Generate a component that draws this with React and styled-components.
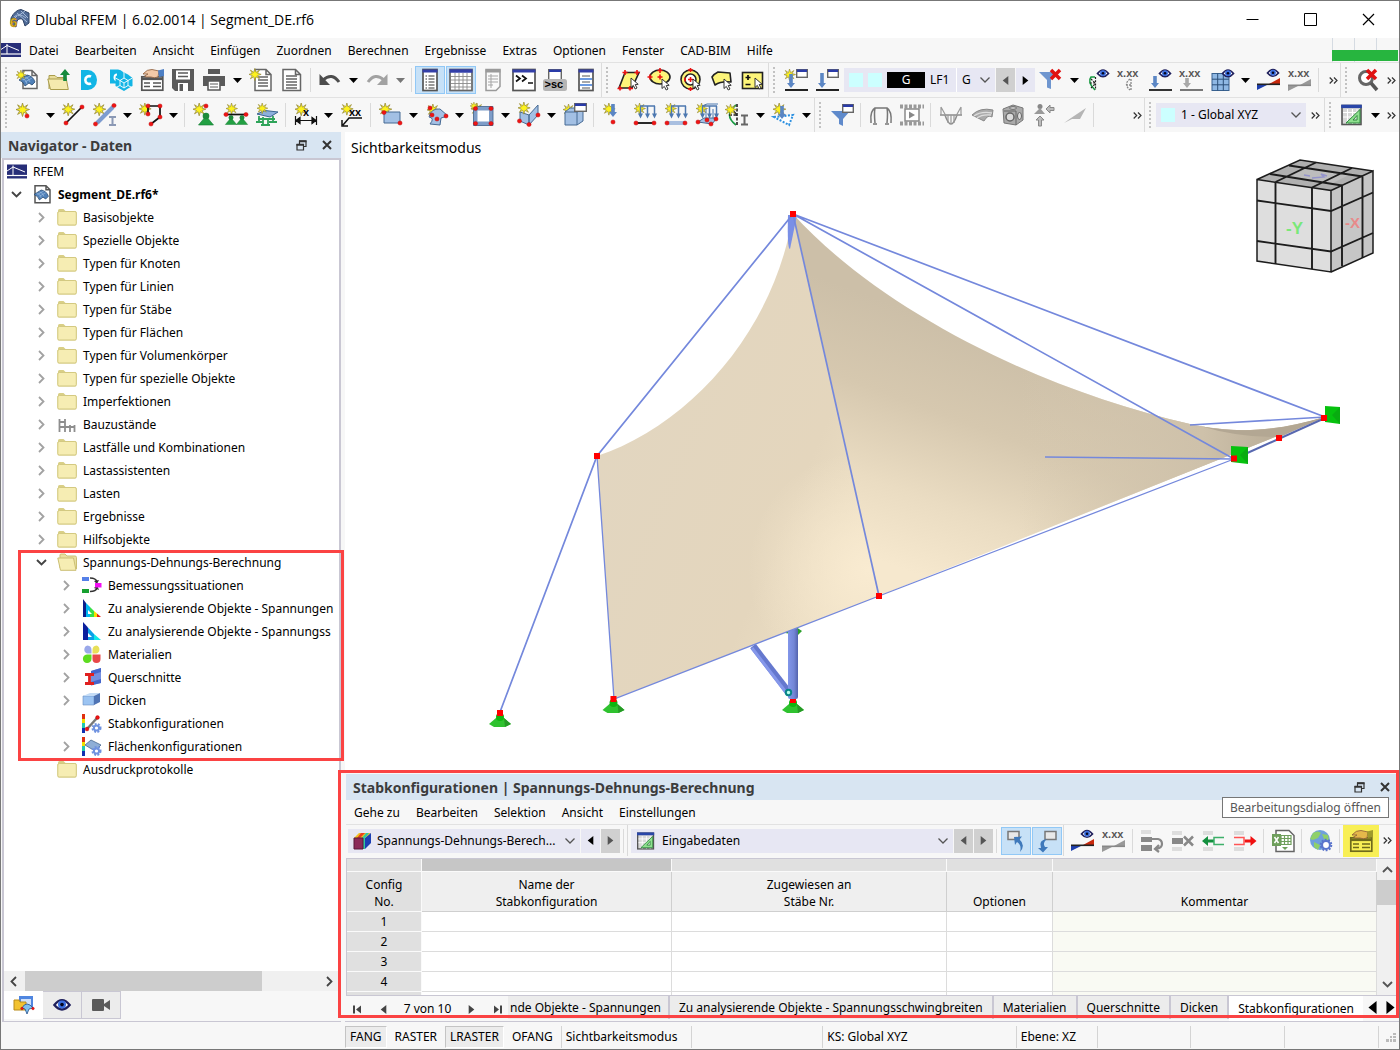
import React from "react";
import styled, { createGlobalStyle, css } from "styled-components";

const Global = createGlobalStyle`
  *, *::before, *::after { box-sizing: border-box; }
  body {
    margin: 0;
    background: #f7f7f7;
    color: #000;
    font: 12px/18px "Noto Sans", "Open Sans", sans-serif;
  }
  button, select { font: inherit; color: inherit; }
  svg { display: block; flex: none; overflow: visible; }
`;

const resetButton = css`
  margin: 0;
  padding: 0;
  border: 0;
  background: none;
`;

/* ---------- frame ---------- */

const Window = styled.div`
  display: flex;
  flex-direction: column;
  height: 100vh;
  min-height: 700px;
  border: 1px solid #777;
  background: #f7f7f7;
  overflow: hidden;
`;

const TitleBar = styled.header`
  display: flex;
  align-items: center;
  height: 37px;
  padding: 0 4px 0 8px;
  gap: 5px;
  background: #fff;
`;

const WindowTitle = styled.h1`
  flex: 1;
  margin: 0;
  font: 400 14px/20px "Open Sans", sans-serif;
`;

const WindowButton = styled.button`
  ${resetButton}
  display: flex;
  align-items: center;
  justify-content: center;
  width: 53px;
  height: 36px;
`;

const MenuBar = styled.nav`
  display: flex;
  align-items: center;
  height: 24px;
  flex: none;
`;

const MenuItem = styled.button`
  ${resetButton}
  padding: 2px 8px 0;
  height: 24px;
`;

const Progress = styled.div`
  display: flex;
  align-self: stretch;
  margin: 0 1px 0 auto;
`;

const ProgressCell = styled.span`
  display: flex;
  align-items: flex-end;
  width: 22px;
  border-left: 1px solid #d5dbe2;

  &::after {
    content: "";
    width: 22px;
    height: 11px;
    margin: 0 0 1px -1px;
    background: #27b53f;
    flex: none;
  }
`;

/* ---------- tool bars ---------- */

const ToolRow = styled.div`
  display: flex;
  align-items: stretch;
  flex: none;
  height: 35px;
  border-top: 1px solid #e2e2e2;
`;

const ToolGroup = styled.div`
  display: flex;
  align-items: center;
  flex: none;
  border-left: ${(p) => (p.$first ? 0 : 1)}px solid #dcdcdc;
  padding-left: 4px;

  &::before {
    content: "";
    width: 2px;
    height: 26px;
    margin-right: 5px;
    background: repeating-linear-gradient(#c2c2c2 0 2px, transparent 2px 4px);
  }
`;

const ToolButton = styled.button`
  ${resetButton}
  display: flex;
  align-items: center;
  justify-content: center;
  align-self: center;
  flex: none;
  width: ${(p) => p.$w || 31}px;
  height: 28px;
  ${(p) =>
    p.$on &&
    css`
      width: 30px;
      margin-right: 1px;
      background: #c7e1f7;
      border: 1px solid #91c8f6;
    `}
  ${(p) =>
    p.$marked &&
    css`
      width: 36px;
      height: 32px;
      background: #f8ef55;
    `}
`;

const Separator = styled.span`
  flex: none;
  width: 1px;
  height: 24px;
  margin: 0 ${(p) => (p.$wide ? 4 : 3)}px 0 3px;
  background: #dadada;
`;

const Spacer = styled.span`
  flex: 1;
`;

const Combo = styled.label`
  display: flex;
  align-items: center;
  gap: ${(p) => p.$gap || 6}px;
  height: 24px;
  margin-left: ${(p) => p.$indent || 0}px;
  padding-left: 5px;
  background: #e7e7f3;
  position: relative;
  flex: ${(p) => (p.$grow ? "1" : "none")};
  width: ${(p) => (p.$w ? p.$w + "px" : "auto")};

  & > svg:last-child {
    position: absolute;
    right: 5px;
    top: 9px;
    pointer-events: none;
  }
`;

const Picker = styled.select`
  appearance: none;
  flex: 1;
  min-width: 0;
  height: 24px;
  padding: 0 20px 0 0;
  border: 0;
  background: transparent;
`;

const Swatch = styled.span`
  width: 14px;
  height: 14px;
  background: #cff;
`;

const LoadTag = styled.span`
  width: 38px;
  height: 16px;
  background: #000;
  color: #fff;
  line-height: 16px;
  text-align: center;
`;

const LoadCase = styled.span`
  width: 27px;
  border-right: 1px solid #fff;
  line-height: 24px;
`;

const Stepper = styled.button`
  ${resetButton}
  display: flex;
  align-items: center;
  justify-content: center;
  width: 19px;
  height: 24px;
  margin-left: 1px;
  background: ${(p) => (p.disabled ? "#d0d0d0" : "#e7e7f3")};
  color: ${(p) => (p.disabled ? "#555" : "#000")};
`;

/* ---------- docks ---------- */

const Workspace = styled.main`
  display: flex;
  flex: 1;
  min-height: 0;
  gap: 4px;
`;

const Navigator = styled.aside`
  display: flex;
  flex-direction: column;
  flex: none;
  width: 340px;
`;

const DockTitle = styled.div`
  display: flex;
  align-items: center;
  flex: none;
  height: 26px;
  padding: 0 5px 0 7px;
  gap: 8px;
  background: #d8e5f2;
  color: #3c3c3c;

  h2 {
    flex: 1;
    margin: 0;
    padding-top: 2px;
    font: 700 14px/20px "Noto Sans", sans-serif;
  }
`;

const DockButton = styled.button`
  ${resetButton}
  display: flex;
  align-items: center;
  justify-content: center;
  width: 18px;
  height: 18px;
`;

const TreeFrame = styled.div`
  display: flex;
  flex-direction: column;
  flex: 1;
  min-height: 0;
  margin-left: 1px;
  border: solid #c9c7d3;
  border-width: 2px 2px 0;
  background: #fff;
`;

const Tree = styled.ul`
  flex: 1;
  min-height: 0;
  margin: 0;
  padding: 0;
  list-style: none;

  ul {
    margin: 0;
    padding: 0;
    list-style: none;
  }
`;

const TreeRow = styled.div`
  display: flex;
  align-items: center;
  height: 23px;
  padding-left: ${(p) => (p.$root ? 3 : p.$level * 25)}px;
  overflow: hidden;
  white-space: nowrap;
  font-weight: ${(p) => (p.$bold ? 700 : 400)};

  & > svg {
    margin: 0 6px 0 ${(p) => (p.$root ? 0 : 4)}px;
  }
`;

const Expander = styled.span`
  display: flex;
  justify-content: center;
  flex: none;
  width: 24px;
`;

const MarkedBranch = styled.li`
  position: relative;

  &::after {
    content: "";
    position: absolute;
    inset: -1px -5px -3px 14px;
    border: 3px solid #fb4343;
    z-index: 2;
    pointer-events: none;
  }
`;

const HScroll = styled.div`
  display: flex;
  align-items: center;
  justify-content: space-between;
  height: 20px;
  padding: 0 6px;
  background: #f0f0f0;

  span {
    flex: 1;
    height: 20px;
    margin: 0 64px 0 8px;
    background: #cdcdcd;
  }
`;

const DockTabs = styled.div`
  display: flex;
  height: 31px;
  margin-left: 1px;
  border: solid #c9c7d3;
  border-width: 0 0 1px 2px;
`;

const DockTab = styled.button`
  ${resetButton}
  display: flex;
  align-items: center;
  justify-content: center;
  width: 39px;
  height: 28px;
  background: ${(p) => (p.$active ? "#fff" : "#ececec")};
  border: solid #c9c7d3;
  border-width: ${(p) => (p.$active ? 0 : "1px 1px 1px 0")};
`;

const Center = styled.div`
  display: flex;
  flex-direction: column;
  flex: 1;
  min-width: 0;
`;

const Viewport = styled.section`
  position: relative;
  flex: 1;
  min-height: 0;
  background: #fff;
`;

const ModeLabel = styled.span`
  position: absolute;
  left: 6px;
  top: 6px;
  font: 14px/20px "Noto Sans", sans-serif;
`;

const CubeBox = styled.div`
  position: absolute;
  right: 19px;
  top: 20px;
`;

const TableDock = styled.section`
  position: relative;
  display: flex;
  flex-direction: column;
  flex: none;
  margin-top: 4px;
  padding-left: 1px;
  height: 248px;
  border-bottom: 1px solid #c9c7d3;

  &::after {
    content: "";
    position: absolute;
    inset: -4px 0 3px -7px;
    border: 3px solid #fb4343;
    z-index: 2;
    pointer-events: none;
  }
`;

const TableTools = styled.div`
  display: flex;
  align-items: center;
  flex: none;
  height: 34px;
  padding: 0 4px 2px 2px;
  border-top: 1px solid #e2e2e2;
`;

const FullSeparator = styled.span`
  align-self: stretch;
  width: 1px;
  margin-right: 3px;
  background: #dadada;
`;

const Tooltip = styled.div`
  position: absolute;
  right: 10px;
  top: 23px;
  z-index: 3;
  height: 21px;
  padding: 0 7px;
  border: 1px solid #767676;
  background: #fff;
  color: #575757;
  line-height: 20px;
`;

const TableArea = styled.div`
  display: flex;
  flex: none;
  height: 138px;
  border: solid #c9c7d3;
  border-width: 1px 0 1px 1px;
  overflow: hidden;
  margin-right: 2px;
`;

const Grid = styled.table`
  flex: 1;
  width: 0;
  height: max-content;
  table-layout: fixed;
  border-collapse: separate;
  border-spacing: 0;
  background: #fff;

  th, td {
    padding: 0;
    font-weight: 400;
    text-align: center;
    border: solid #dcdcdc;
    border-width: 0 1px 1px 0;
  }
  thead tr:first-child th {
    height: 13px;
    background: #e0e0e0;
    border-color: #fafafa;
  }
  thead tr:first-child th:nth-child(2) { background: #c6c6c6; }
  thead tr:last-child th {
    height: 40px;
    padding-bottom: 1px;
    background: #efefef;
    border-color: #cfcfcf;
    vertical-align: bottom;
    line-height: 17px;
  }
  tbody tr > * {
    height: 20px;
    line-height: 19px;
  }
  tbody td:last-child { background: #f9faf3; }
  tr > th:first-child, thead tr:last-child th:first-child {
    background: #e0e0e0;
    border-color: #fafafa;
  }
`;

const VScroll = styled.div`
  display: flex;
  flex-direction: column;
  align-items: center;
  justify-content: space-between;
  flex: none;
  width: 20px;
  padding: 7px 0;
  background: #f0f0f0;

  span {
    width: 20px;
    height: 25px;
    margin: 7px 0 auto;
    background: #cdcdcd;
  }
`;

const SheetBar = styled.div`
  display: flex;
  flex: none;
  height: 25px;
`;

const Pager = styled.div`
  display: flex;
  align-items: center;
  justify-content: space-between;
  flex: none;
  width: 162px;
  padding: 1px 4px 0 5px;
`;

const PagerButton = styled.button`
  ${resetButton}
  width: 12px;
  display: flex;
  justify-content: center;
  color: #444;
`;

const SheetArrow = styled.button`
  ${resetButton}
  display: flex;
  align-items: center;
  justify-content: center;
  width: 18px;
  height: 22px;
`;

const SheetTab = styled.button`
  ${resetButton}
  flex: ${(p) => (p.$grow ? "1 1 0" : "none")};
  height: ${(p) => (p.$active ? 25 : 23)}px;
  padding: ${(p) => (p.$grow ? "0 7px 0 0" : "0 9px")};
  white-space: nowrap;
  text-align: ${(p) => (p.$grow ? "right" : "center")};
  background: ${(p) => (p.$active ? "#fff" : "#ececec")};
  border-right: ${(p) => (p.$active ? 0 : 2)}px solid #c9c7d3;
  line-height: 24px;
`;

const StatusBar = styled.footer`
  display: flex;
  align-items: center;
  flex: none;
  height: 27px;
  padding: 3px 3px 0 344px;
`;

const StatusToggle = styled.button`
  ${resetButton}
  height: 22px;
  padding: 0 4px;
  margin-right: 3px;
  border: 1px solid transparent;
  ${(p) =>
    p.$on &&
    css`
      background: #ececec;
      border-color: #c4c4c4 #fff #fff #c4c4c4;
    `}
`;

const StatusCell = styled.span`
  width: ${(p) => p.$w}px;
  height: 22px;
  padding-left: 4px;
  border-left: 1px solid #d4d4d4;
  line-height: 22px;
  white-space: nowrap;
`;

/* ---------- drawing parts ---------- */

const Star = ({ x = 0, y = 0, s = 1 }) => (
  <path
    transform={`translate(${x} ${y}) scale(${s})`}
    d="M6.5 0 7.8 4.3 11.6 1.8 9.4 5.4 13.5 6.5 9.4 7.9 11.6 11.4 7.8 9.2 6.5 13.5 5.3 9.2 1.6 11.4 3.7 7.9 0 6.5 3.7 5.4 1.6 1.8 5.3 4.3Z"
    fill="#fdf21c"
    stroke="#978a3a"
    strokeWidth=".8"
  />
);
const Dot = ({ x, y, r = 2.1 }) => <circle cx={x} cy={y} r={r} fill="#f01414" stroke="#b00000" strokeWidth=".4" />;
const Eye = ({ x = 0, y = 0 }) => (
  <g transform={`translate(${x} ${y})`}>
    <path d="M.5 4.5Q6 -2.5 11.5 4.5Q6 11 .5 4.5Z" fill="#fff" stroke="#20205c" strokeWidth="1.7" />
    <circle cx="6" cy="4.2" r="2.9" fill="#3a6ee0" />
    <circle cx="6" cy="4.2" r="1.3" fill="#05051c" />
  </g>
);
const Cursor = ({ x, y }) => (
  <path transform={`translate(${x} ${y})`} d="M0 0V9.5L2.3 7.4 4.2 11 6 10 4.2 6.6 7.2 6.3Z" fill="#fff" stroke="#222" strokeWidth=".9" />
);
const Down = ({ x, y, h = 12, c = "#5b86c4" }) => (
  <path d={`M${x - 1.8} ${y}h3.6v${h - 5}h2.2L${x} ${y + h}l-4-5h2.200z`} fill={c} />
);
const Win = ({ x, y, w, h, c = "#2a3ba8" }) => (
  <g>
    <rect x={x + 0.7} y={y + 0.7} width={w - 1.4} height={h - 1.4} fill="#fff" stroke="#666" strokeWidth="1.4" />
    <rect x={x + 1} y={y + 0.5} width={w - 2} height="2.5" fill={c} />
  </g>
);
const Sheet = ({ x, y, w, h, fold = 5, c = "#666" }) => (
  <path d={`M${x} ${y}h${w - fold}l${fold} ${fold}v${h - fold}h${-w}zM${x + w - fold} ${y}v${fold}h${fold}`} fill="#fff" stroke={c} strokeWidth="1.5" />
);
const Num = ({ x = 0, y = 0, c = "#555" }) => (
  <text x={x} y={y} fontSize="11" fontWeight="700" fontFamily="Liberation Sans" fill={c}>x.xx</text>
);
const Foot = ({ x, y, s = 1 }) => (
  <g transform={`translate(${x} ${y}) scale(${s})`}>
    <path d="M0 1 7.5 10H-7.5Z" fill="#22a043" stroke="#117a30" strokeWidth=".6" />
    <circle cx="0" cy="1" r="3.3" fill="#1d8a3c" />
  </g>
);
const Arch = ({ x = 0, y = 0, s = 1 }) => (
  <g transform={`translate(${x} ${y}) scale(${s})`}>
    <path d="M0 5 8 0q6 1 8 7l-3 3-3-2-4 3Q4 6 0 5Z" fill="#4f80b8" stroke="#24476e" strokeWidth=".8" />
    <path d="M3 4q4 0 5 5M6 2q4 1 5 5M4 5l7-4M6 7l7-4" fill="none" stroke="#a9c8e8" strokeWidth=".6" />
  </g>
);
const Slab = ({ d }) => <path d={d} fill="#a3c0e4" stroke="#476a94" strokeWidth="1" />;
const Cross = ({ x, y, s = 8, c = "#e01010", w = 3 }) => (
  <path d={`M${x} ${y}l${s} ${s}M${x + s} ${y}l${-s} ${s}`} stroke={c} strokeWidth={w} fill="none" />
);
const DiagramShape = ({ a = "#1e3fae", b = "#c8280c", k = "#222" }) => (
  <g>
    <path d="M0 16 0 22 12 16Z" fill={a} />
    <path d="M12 16 23 10v6Z" fill={b} />
    <path d="M0 16.3h23" stroke={k} strokeWidth="1.6" />
  </g>
);
const Calc = () => (
  <g>
    <rect x="2" y="2.5" width="19" height="19" fill="#d8d8d8" stroke="#555" strokeWidth="1.6" />
    <rect x="1.200" y="1.7" width="20.600" height="3.4" fill="#2946a8" />
    <path d="M3 9.5h17M3 14h17M7.5 6v15M12.5 6v15M17 6v15" stroke="#fff" strokeWidth="1" />
    <path d="M6 20 20 6.5V20ZM13 17h4v-4.5Z" fill="#8fe08f" fillRule="evenodd" stroke="#2f8a3f" strokeWidth="1" />
  </g>
);
const CardBox = ({ c = "#555", w = "#fff", hand = "#f2c9a8", cuff = "#4d7fc4" }) => (
  <g>
    <rect x="1.8" y="8.8" width="21" height="13.4" fill={w} stroke={c} strokeWidth="1.7" />
    <path d="M1.5 10.8h21.5" stroke={c} strokeWidth="2.6" />
    <path d="M4 15h6M13 15h8M4 18.5h6M13 18.5h8" stroke={c} strokeWidth="1.5" />
    <path d="M3 6q4-5 9-4.5L19 3l-1 6q-4 1.500-7 0L6 9 4.500 8 8 6Z" fill={hand} stroke="#8a5a38" strokeWidth=".8" />
    <path d="M18 2.500 24 1v7l-5 1z" fill={cuff} />
  </g>
);
const LoadArrows = ({ base }) => (
  <g>
    <Star x={1} y={0} s={0.85} />
    <path d="M7 3H22M7.500 3v9M14.500 3v9M21.500 3v9" stroke="#4d78b0" strokeWidth="1.500" fill="none" />
    <path d="M5 10.500h5L7.500 15.500zM12 10.500h5l-2.500 5zM19 10.500h5l-2.500 5z" fill="#4d78b0" />
    {base}
  </g>
);
const RfemMark = () => (
  <g>
    <rect width="20" height="14" fill="#272e78" />
    <path d="M0 11h20" stroke="#fff" strokeWidth="1.2" />
    <path d="M0 6.500 6 2.500 18 7.500M6 1v10" stroke="#fff" strokeWidth="1" fill="none" />
  </g>
);
const Gear = ({ x, y, r = 3.500, c = "#6f92e0" }) => (
  <g>
    <circle cx={x} cy={y} r={r + 0.8} fill="none" stroke={c} strokeWidth="2" strokeDasharray="1.900 1.400" />
    <circle cx={x} cy={y} r={r - 0.6} fill="#fff" stroke={c} strokeWidth="2" />
  </g>
);

const art = {
  newModel: <><Sheet x={7} y={2.5} w={14} h={18} /><Arch x={3} y={7} /><Star x={0} y={2} s={0.75} /></>,
  open: <><path d="M2 21V7.500h6l2 2h9V13" fill="#e8dc9a" stroke="#a99c4c" /><path d="M.8 11h18.500l2 10.500H3.500Z" fill="#f4eaae" stroke="#a99c4c" /><path d="M18 1 23 7h-3.200v6h-3.600V7H13Z" fill="#168a3d" /></>,
  dlubal: <><path d="M3 2H10a9 10 0 0 1 0 20H3Z" fill="#12b5e5" /><path d="M13 8.700a3.800 3.800 0 1 0 0 6.600" fill="none" stroke="#fff" strokeWidth="2.600" /></>,
  cubes: <><path d="M1 1.500h8q6 1 7 7v7H1z" fill="#12b5e5" /><path d="M8 6.500a2.500 3 0 1 0 0 6" fill="none" stroke="#fff" strokeWidth="2" /><path d="M15 4.500 19 6.500 23.500 10v8L19 20.500 15 23 10.500 20.500 6.500 18V10.500L11 8Z" fill="#12b5e5" /><path d="M15 5v5l4 2.500 4.500-2.500M15 10l-4 2.500L6.500 10M11 12.500v5l4 2.500 4-2.500v-5L15 15l-4-2.500M15 15v5M11 17.500l-4 2M19 17.500l4 2" stroke="#fff" strokeWidth=".9" fill="none" /></>,
  cards: <CardBox />,
  save: <><path d="M1 1h22v22H4L1 20Z" fill="#5a5a5a" /><rect x="5" y="2.500" width="14" height="9" fill="#fff" /><path d="M7 5h10M7 8.500h10" stroke="#5a5a5a" strokeWidth="1.500" /><rect x="7" y="15" width="10" height="8" fill="#fff" /><rect x="8.500" y="16" width="3.500" height="7" fill="#5a5a5a" /></>,
  print: <><path d="M6 1h12v5H6zM1 8h22v10H1z" fill="#5a5a5a" /><path d="M6 13h12v9H6z" fill="#fff" stroke="#5a5a5a" strokeWidth="1.600" /><path d="M8 16h8M8 19h8" stroke="#5a5a5a" /></>,
  newReport: <><Sheet x={6} y={1.5} w={16} h={21} /><path d="M9 9h10M9 12h10M9 15h10M9 18h10" stroke="#666" strokeWidth="1.300" /><Star x={0} y={0.5} s={0.9} /></>,
  report: <><Sheet x={3} y={1.5} w={17.500} h={21} /><path d="M6 8h11M6 11h11M6 14h11M6 17h11M6 20h11" stroke="#666" strokeWidth="1.300" /></>,
  undo: <><path d="M1.500 6v11h10.500Z" fill="#4d4d4d" /><path d="M5 12q9-8 16 2" fill="none" stroke="#4d4d4d" strokeWidth="3" /></>,
  redo: <><path d="M22.500 6v11H12Z" fill="#a2a2a2" /><path d="M19 12q-9-8-16 2" fill="none" stroke="#a2a2a2" strokeWidth="3" /></>,
  winList: <><rect x="5" y="1.500" width="14" height="21" fill="#fff" stroke="#555" strokeWidth="1.700" /><path d="M4.500 3h15" stroke="#333fa8" strokeWidth="3" /><path d="M7.500 8h1.500M10.500 8h6M7.500 11h1.500M10.500 11h6M7.500 14h1.500M10.500 14h6M7.500 17h1.500M10.500 17h6M7.500 20h1.500M10.500 20h6" stroke="#333" /></>,
  winTable: <><rect x="1" y="1.500" width="22" height="21" fill="#fff" stroke="#666" strokeWidth="1.700" /><path d="M.5 3h23" stroke="#333fa8" strokeWidth="3.500" /><path d="M2 8.500h20M2 12h20M2 15.500h20M2 19h20M6 5v17M10 5v17M14 5v17M18 5v17" stroke="#8b8b8b" strokeWidth=".9" /></>,
  winGrey: <><path d="M5 1.500h14v17l-4 4H5z" fill="#fafafa" stroke="#9a9a9a" strokeWidth="1.500" /><path d="M4.500 3h15" stroke="#9a9a9a" strokeWidth="3" /><path d="M7 8h10M7 11h10M7 14h10M7 17h5M10 6v14" stroke="#a5a5a5" /></>,
  console: <><rect x="1" y="1.500" width="22" height="21" fill="#fff" stroke="#555" strokeWidth="1.700" /><path d="M.5 3h23" stroke="#333fa8" strokeWidth="3" /><path d="M4 7.500 8 10.500 4 13.500M10 7.500 14 10.500 10 13.500M16 15h5" fill="none" stroke="#111" strokeWidth="1.700" /></>,
  script: <><Win x={5} y={1} w={14} h={14} /><rect x="0" y="11" width="24" height="12" rx="2.500" fill="#b5b5b5" /><text x="1.500" y="20" fontSize="11" fontWeight="700" fontFamily="Liberation Sans">&gt;sc</text></>,
  winBlue: <><rect x="5" y="1.500" width="14" height="21" fill="#fff" stroke="#555" strokeWidth="1.700" /><path d="M4.500 3h15" stroke="#333fa8" strokeWidth="3" /><path d="M8 8h8M8 14h8M8 20h8" stroke="#555" strokeWidth="1.200" /><path d="M6 11h12M6 17h12" stroke="#3e7bd8" strokeWidth="1.600" /></>,
  selRhomb: <><path d="M8 4.500h14L15 20H2Z" fill="#fdf57a" stroke="#222" strokeWidth="1.600" /><path d="M8 2v5M5.500 4.500h5M20 2v5M17.500 4.500h5M3 18v4.500M.5 20.500h5M13 18v4.500M11 20.500h5" stroke="#e11" strokeWidth="1.600" /><Cursor x={14} y={10} /></>,
  selEllipse: <><ellipse cx="12" cy="9" rx="10" ry="7" fill="#fdf57a" stroke="#222" strokeWidth="1.600" /><path d="M12 0v5M9.500 2.500h5M2 6.500v5M-.5 9h5M12 6.500v5M9.500 9h5" stroke="#e11" strokeWidth="1.600" /><Cursor x={14} y={11} /></>,
  selRing: <><circle cx="11.500" cy="11.500" r="9.500" fill="#fdf57a" stroke="#222" strokeWidth="1.600" /><circle cx="11.500" cy="11.500" r="5.500" fill="#fff" stroke="#222" strokeWidth="1.500" /><path d="M11.500 0v4M11.500 19v4M9 21h5M9 2h5M11.500 9v5M9 11.500h5M6 9.500v4" stroke="#e11" strokeWidth="1.600" /><Cursor x={14} y={11} /></>,
  selPoly: <><path d="M2 9Q4 6 8 4L20 5 21 14Q11 13 5 17Z" fill="#fdf57a" stroke="#222" strokeWidth="1.600" strokeLinejoin="round" /><Cursor x={14} y={11} /></>,
  selPm: <><rect x="1.500" y="4.500" width="20" height="16" fill="#fdf57a" stroke="#222" strokeWidth="1.600" /><path d="M4.500 9.500h5M7 7v5M4.500 16.500h5" stroke="#111" strokeWidth="1.700" /><Cursor x={14} y={10} /></>,
  newLoadCase: <><path d="M1 22h23" stroke="#222" strokeWidth="2" /><Star x={0} y={1} s={0.85} /><Down x={7} y={6} h={14} /><Win x={12} y={1} w={12} h={9} /></>,
  loadCase: <><path d="M1 22h23" stroke="#222" strokeWidth="2" /><Down x={7} y={5} h={15} /><Win x={12} y={1} w={12} h={9} /></>,
  funnelX: <><path d="M0 4h19l-7 8v9l-4-1.500V12Z" fill="#6f96cf" /><Cross x={12} y={2} s={9} w={3.500} /></>,
  eyeSection: <><path d="M9 9H5Q1 14 9 22" fill="none" stroke="#189a42" strokeWidth="1.600" /><path d="M9.500 9v13M4 15h5M5 11l4 4M5 20l4-4" stroke="#222" strokeDasharray="2 1.200" strokeWidth="1.200" /><Eye x={11} y={1} /></>,
  numSection: <><Num x={0} y={9} /><path d="M13 11q-7 5 0 11M14 11v11M9 17h5" fill="none" stroke="#888" strokeDasharray="2 1" strokeWidth="1.300" /></>,
  eyeLoad: <><path d="M1 22h23" stroke="#333" strokeWidth="2" /><Down x={7} y={8} h={12} /><Eye x={11} y={1} /></>,
  numLoad: <><path d="M1 22h23" stroke="#777" strokeWidth="2" /><Num x={0} y={9} /><Down x={8} y={10} h={10} c="#a8a8a8" /></>,
  eyeGrid: <><rect x="2" y="5.500" width="17" height="17" fill="#8fb8e4" stroke="#38618f" /><path d="M7.700 5.500v17M13.300 5.500v17M2 11.200h17M2 16.800h17" stroke="#2c4f78" /><Eye x={12} y={1} /></>,
  eyeDiagram: <><DiagramShape /><Eye x={10} y={0.5} /></>,
  numDiagram: <><g transform="translate(0 1)"><DiagramShape a="#999" b="#999" k="#888" /></g><Num x={0} y={9} /></>,
  findX: <><circle cx="10" cy="10" r="6.500" fill="#fff" stroke="#666" strokeWidth="3" /><path d="M15 15 21 22" stroke="#555" strokeWidth="3.500" /><Cross x={11} y={2} s={9} w={3.500} /></>,
  node: <><Star x={0} y={0} /><Dot x={11} y={13} /></>,
  line: <><Star x={0} y={0} s={0.95} /><path d="M4 20 20 4" stroke="#111" strokeWidth="1.700" /><Dot x={4} y={20} /><Dot x={20} y={4} /></>,
  member: <><Star x={0} y={0} s={0.95} /><path d="M4 20 20 4" stroke="#7d9cd0" strokeWidth="4" /><Dot x={2.500} y={21} /><Dot x={21} y={2.500} /><path d="M16 14h7M16 22h7M19.500 14v8" stroke="#8b99b5" strokeWidth="2" /></>,
  polyline: <><Star x={0} y={0} s={0.9} /><path d="M9 11V3H21V14L12 21" fill="none" stroke="#111" strokeWidth="1.700" /><Dot x={9} y={11} /><Dot x={9} y={3} /><Dot x={21} y={3} /><Dot x={21} y={14} /><Dot x={12} y={21} /></>,
  support: <><Star x={0} y={0} s={0.95} /><Foot x={13} y={12} /><Dot x={13} y={3} /></>,
  lineSupport: <><Star x={2} y={0} s={0.85} /><Foot x={7} y={14} s={0.75} /><Foot x={18} y={14} s={0.75} /><path d="M2 11.500h21" stroke="#111" strokeWidth="1.700" /><Dot x={2} y={11.500} /><Dot x={22} y={11.500} /></>,
  surfSupport: <><path d="M4 13v6M8 14v7M13 15v6M18 13v6M1 19h7M6 22h9M14 19h8M3 16h17" stroke="#2fa45a" strokeWidth="1.800" /><path d="M2 11 10 7.500 23 9 15 14Z" fill="#8db0dc" stroke="#3c6590" /><Star x={2} y={0} s={0.8} /></>,
  dimX: <><Star x={1} y={0} s={0.95} /><path d="M1.500 13v9M22.500 13v9M2 17.500h20M2 17.500l4-3v6zM22 17.500l-4-3v6z" fill="#111" stroke="#111" strokeWidth="1.200" /><text x="9" y="13" fontSize="11" fontWeight="700" fontFamily="Liberation Sans">x</text></>,
  dimXX: <><Star x={1} y={0} s={0.9} /><path d="M22 15H9L3 22M2 17v6h6" fill="none" stroke="#111" strokeWidth="1.500" /><text x="9" y="13" fontSize="11" fontWeight="700" fontFamily="Liberation Sans">xx</text></>,
  surface: <><Star x={0} y={0} s={0.95} /><Slab d="M5 9H21V20H5Z" /><Dot x={5} y={9.500} /><Dot x={21} y={20} /></>,
  shell: <><Star x={2} y={1} s={0.9} /><Slab d="M4 14Q6 5 15 6L23 13 16 15 15 22 5 21Q10 15 4 14Z" /><Dot x={5} y={5} /><Dot x={7} y={12} /><Dot x={12} y={16} /><Dot x={21} y={13} /></>,
  opening: <><Star x={0} y={0} s={0.9} /><path d="M4.500 5.500H20V20.500H4.500Z" fill="#fff" stroke="#7e9dc8" strokeWidth="4" /><path d="M2.500 3.500H22V22.500H2.500Z" fill="none" stroke="#3d5f8a" strokeWidth=".8" /><Star x={-1} y={-1} s={0.6} /><Dot x={4.500} y={5.500} /><Dot x={20} y={5.500} /><Dot x={4.500} y={20.500} /><Dot x={20} y={20.500} /></>,
  solid: <><Slab d="M3 9 12 12V22L3 18ZM12 12 21 2V12L12 22Z" /><Star x={1} y={-1} s={0.9} /><Dot x={2.500} y={18} /><Dot x={12} y={21.500} /><Dot x={21} y={12} /></>,
  solidBox: <><Star x={0} y={1} s={0.85} /><Slab d="M2 9H14V22H2ZM2 9 7 5H20L14 9M14 9 20 6V18L14 22" /><Win x={11} y={0} w={13} h={9} /></>,
  nodeLoad: <><Star x={1} y={0} s={0.9} /><Down x={11} y={1} h={13} /><Dot x={11} y={19} /></>,
  lineLoad: <LoadArrows base={<><path d="M3 20h18" stroke="#111" strokeWidth="1.800" /><Dot x={3} y={20} /><Dot x={21} y={20} /></>} />,
  memberLoad: <LoadArrows base={<><path d="M3 20h18" stroke="#a9bfe0" strokeWidth="4" /><Dot x={3} y={20} /><Dot x={21} y={20} /></>} />,
  surfaceLoad: <LoadArrows base={<><Slab d="M3 19 9 15H22L17 21Z" /><path d="M7 3 12 1H23M11 6v9M18 6v9" stroke="#4d78b0" fill="none" /><Dot x={3} y={19} /><Dot x={12} y={17} /><Dot x={21} y={16} /><Dot x={16} y={21} /></>} />,
  imperfection: <><path d="M10 2Q-3 12 10 22" fill="none" stroke="#189a42" strokeWidth="1.700" /><path d="M11 1v21M3 12h8M5 5l6 7" stroke="#222" strokeDasharray="3 1.500" strokeWidth="1.600" /><Star x={-1} y={1} s={0.85} /><path d="M15 12.500h7M15 21.500h7M18.500 12.500v9" stroke="#666" strokeWidth="2" /></>,
  freeLoad: <><Star x={1} y={0} s={0.95} /><path d="M2 14 21 12 17 22Z" fill="#fff" stroke="#2a8fe0" strokeWidth="2" strokeDasharray="2 1.500" /><Down x={10} y={3} h={13} /></>,
  funnelWin: <><path d="M1 8h19l-7 8v7l-4-2V16Z" fill="#5f8acb" /><Win x={12} y={1} w={12} h={9} /></>,
  portal: <path d="M2 20V18M6 20Q5 10 6 5H18Q19 10 18 20M22 20Q23 8 18 5M2 18Q1 8 6 5M4 21h4M16 21h4" fill="none" stroke="#777" strokeWidth="1.500" />,
  film: <><path d="M0 3.500h24M0 20.500h24" stroke="#999" strokeWidth="4" strokeDasharray="3 1.500" /><rect x="5" y="6" width="14" height="12" fill="#fff" stroke="#8a8a8a" strokeWidth="1.500" /><path d="M9 8.500v7l6-3.500z" fill="#888" /></>,
  bend: <><path d="M1 12H23M6 12Q12 30 18 12" fill="none" stroke="#8c8c8c" strokeWidth="1.500" /><path d="M2 4 7 13M22 4 17 13M2 4v8M22 4v8M9 12v8M12 12v9M15 12v8" fill="none" stroke="#999" strokeWidth="1.200" /></>,
  fan: <><path d="M2 12Q10 4 23 7L22 14Q18 11 14 18L8 15Z" fill="#aaa" stroke="#888" /><path d="M4 13q7-5 18-3M7 15q5-4 14-3" stroke="#ddd" strokeWidth="1.300" fill="none" /></>,
  dice: <><path d="M2 6 12 2 22 5V17L15 22 3 20Z" fill="#aaa" stroke="#777" /><path d="M3 8H15V22" stroke="#666" fill="none" /><circle cx="9" cy="14" r="4" fill="#ddd" stroke="#666" strokeWidth="1.500" /><ellipse cx="18.500" cy="13" rx="2" ry="3.500" fill="#ddd" stroke="#666" /><ellipse cx="12" cy="5" rx="3.500" ry="1.300" fill="#ddd" stroke="#666" /></>,
  reaction: <><circle cx="8" cy="3.500" r="2.500" fill="#888" /><path d="M8 5 13 11H2Z" fill="#999" /><path d="M8 13 12 17H9.500V23h-3V17H4ZM14 6l4-4v2.500h4v3h-4V10z" fill="#bbb" stroke="#888" /></>,
  wing: <path d="M1 20 8 15 23 5 17 16 9 16Z" fill="#b5b5b5" />,
  calc: <Calc />,
  jumpUp: <><rect x="4" y="2.500" width="11" height="8" fill="#e8e8e8" stroke="#777" strokeWidth="1.500" /><path d="M10 8 18 7.500 15.500 10.500Q22 16 16 23 18 16 13 13L11 16Z" fill="#3f79bb" /></>,
  jumpDown: <><rect x="10" y="2.500" width="11" height="8" fill="#e8e8e8" stroke="#777" strokeWidth="1.500" /><path d="M12 10Q3 11 6 19H3L8 23.500 13 18H10Q7 14 12 10Z" fill="#3f79bb" /></>,
  rowBack: <><path d="M1 3h10" stroke="#ddd" strokeWidth="4" /><path d="M1 8h11v5H1zM1 16h11v6H1z" fill="#888" /><path d="M12 10h6q4 1 4 5t-6 5M19 16l-4 4 4 3" fill="none" stroke="#888" strokeWidth="2.200" /></>,
  rowDelete: <><path d="M1 4h10M1 20h10" stroke="#ddd" strokeWidth="4" /><path d="M1 9h11v6H1z" fill="#888" /><Cross x={13} y={7.500} s={9} c="#888" w={2.500} /></>,
  rowIn: <><path d="M1 4h10M1 20h10" stroke="#ddd" strokeWidth="4" /><path d="M0 12 6 7v3.500h6v3H6V17Z" fill="#14903f" /><path d="M22 8.500H12V15.500H22" fill="none" stroke="#3eb06a" strokeWidth="1.500" /></>,
  rowOut: <><path d="M1 4h10M1 20h10" stroke="#ddd" strokeWidth="4" /><path d="M23.500 12 17.500 7v3.500h-6v3h6V17Z" fill="#f01010" /><path d="M1 8.500H11V15.500H1" fill="none" stroke="#f55" strokeWidth="1.500" /></>,
  excel: <><path d="M5 1.500h13l5 5V22.500H5z" fill="#fff" stroke="#666" strokeWidth="1.500" /><path d="M10 6.500h10v9H10zM10 9.500h10M10 12.500h10M13.500 6.500v9M17 6.500v9" fill="none" stroke="#6f9f5c" strokeWidth="1.200" /><rect x="1" y="5" width="9" height="12" fill="#6f9f5c" /><path d="M3.500 8 7.500 14M7.500 8 3.500 14" stroke="#fff" strokeWidth="1.500" /><path d="M11 18h6l-3 3z" fill="#6f9f5c" /></>,
  globe: <><circle cx="11" cy="11" r="10" fill="#6fa0dc" /><path d="M4 4q5-3 8 0l-3 5-5 2-3-1zM13 5l6 1 1 6-5-2zM5 13l6 3-2 5-4-3z" fill="#8fd06a" /><Gear x={17} y={16} r={4.500} c="#5a74cc" /></>,
  cardsMarked: <CardBox c="#6f6a1c" w="#f8ef55" hand="#e5b84a" cuff="#a09a2c" />,
};

const Icon = ({ name, size = 24 }) => (
  <svg width={size} height={size} viewBox="0 0 24 24" aria-hidden="true">{art[name]}</svg>
);

const Chevron = () => (
  <svg width="10" height="6" viewBox="0 0 10 6"><path d="M.5.5 5 5 9.500.5" fill="none" stroke="#555" strokeWidth="1.300" /></svg>
);
const Triangle = ({ left, h = 9, bar }) => (
  <svg width={bar ? 10 : h} height={h} viewBox={bar ? "0 0 10 8" : "1 0 8 8"} fill="currentColor">
    <g transform={left ? undefined : "translate(10 0) scale(-1 1)"}>
      <path d={bar ? "M9 0v8L4 4z" : "M7.500 0v8L2.500 4z"} />
      {bar && <path d="M1 0h2v8H1z" />}
    </g>
  </svg>
);
const DropDown = ({ w = 16, grey }) => (
  <ToolButton $w={w} aria-label="Mehr">
    <svg width="9" height="5" viewBox="0 0 9 5"><path d="M0 0h9L4.500 5z" fill={grey ? "#777" : "#000"} /></svg>
  </ToolButton>
);
const More = ({ w = 16 }) => (
  <ToolButton $w={w} aria-label="Weitere">
    <svg width="9" height="7" viewBox="0 0 9 7"><path d="M.7.5 3.700 3.500.7 6.500M5 .5 8 3.500 5 6.500" fill="none" stroke="#333" strokeWidth="1.200" /></svg>
  </ToolButton>
);
const Tools = ({ items, drop, wide }) =>
  items.split(" ").map((it, i) => {
    if (it === "|") return <Separator key={i} $wide={wide} />;
    if (it === "v") return <DropDown key={i} w={drop} />;
    if (it === "g") return <DropDown key={i} w={drop} grey />;
    const on = it[0] === "*";
    const name = on ? it.slice(1) : it;
    return <ToolButton key={i} $on={on} aria-label={name}><Icon name={name} /></ToolButton>;
  });

/* ---------- tree ---------- */

const treeArt = {
  folder: <><path d="M1 4V2.500Q1 1 2.500 1H6.500L8.500 3H18Q19.500 3 19.500 4.500V16Q19.500 17.500 18 17.500H2Q.5 17.500.5 16V4Z" fill="#d9cf86" /><rect x=".8" y="3.500" width="18.500" height="13.500" rx="1.500" fill="#f6edb3" stroke="#d3c981" /></>,
  openFolder: <><path d="M3 15V2Q3 1 4 1H8L10 3H18Q19.500 3 19.500 4.500V16" fill="#e9dfa0" stroke="#cbbf74" /><path d="M.8 5H16.500L19 17.300H3.500Z" fill="#f6edb3" stroke="#cbbf74" /></>,
  stages: <path d="M2.500 4V17M8 4V17M2 7H8M2 12H18M13 10V17M17.500 10V17" fill="none" stroke="#8e8e8e" strokeWidth="1.800" />,
  model: <><Sheet x={3} y={0.8} w={15} h={17} fold={4} c="#555" /><Arch x={2} y={5} s={0.9} /></>,
  situations: <><path d="M0 1h7v4H0z" fill="#5580e8" /><path d="M0 13h7v4H0z" fill="#16a030" /><path d="M8 2Q14 2 15 6M8 15.500Q14 15.500 15 12" fill="none" stroke="#333" strokeWidth="1.500" /><path d="M12 5l5-1-2 4zM12 12l5 2-2-5z" fill="#333" /><path d="M13 7h6.500v4.500h-6.500z" fill="#f20df2" /></>,
  stress: <><path d="M1 0V18H4V4Z" fill="#0a1e8c" /><path d="M4 4V18H8V8Z" fill="#00b8f0" /><path d="M8 8V18H12V12Z" fill="#38e048" /><path d="M12 12V18H15V14.500Z" fill="#f8e000" /><path d="M15 14.500V18H19Z" fill="#e82010" /><path d="M6 11v4h4z" fill="#fff" /></>,
  range: <><path d="M1 0V18H6V5.500Z" fill="#0a1e9c" /><path d="M6 5.500V18H12V12Z" fill="#0aa0e8" /><path d="M12 12V18H19Z" fill="#10e8e8" /><path d="M6 11v4h4z" fill="#fff" /></>,
  material: <><path d="M5.500.5a4.500 4.500 0 0 1 4 4.500v3.500H5a4.200 4.200 0 0 1 .5-8Z" fill="#9aa8ea" /><path d="M14.500.5a4.200 4.200 0 0 1 0 8H10.500V5a4.500 4.500 0 0 1 4-4.500Z" fill="#e8e058" /><path d="M5.500 9.500H9.500V14a4.300 4.300 0 1 1-4-4.500Z" fill="#5ddc20" /><path d="M10.500 9.500h8v4.500a4 4 0 0 1-8 0Z" fill="#e84848" /></>,
  section: <><path d="M9 3 19 0V15L9 17Z" fill="#7590e0" /><path d="M9 3 19 0V4L9 7ZM9 14l10-3v4L9 17.500Z" fill="#4566cc" /><path d="M3 6.500h9M3 15.500h9M7.500 6v10" stroke="#e02020" strokeWidth="2.800" /></>,
  thickness: <><path d="M1 5H12V14H1Z" fill="#9cc4f2" stroke="#6a8fc0" strokeWidth=".6" /><path d="M1 5 8 2H18L12 5Z" fill="#c4dcf6" /><path d="M12 5 18 2V11L12 14Z" fill="#4f74b4" /></>,
  memberCfg: <><path d="M1.500 0v19" stroke="#e03010" strokeWidth="3" /><path d="M1.500 5v4" stroke="#f0e000" strokeWidth="3" /><path d="M1.500 9v5" stroke="#20c8b0" strokeWidth="3" /><path d="M1.500 14v5" stroke="#1030b0" strokeWidth="3" /><path d="M5 15 15 4" stroke="#777" strokeWidth="2.500" /><Dot x={5} y={15} r={1.900} /><Dot x={15.500} y={3.500} r={1.900} /><Gear x={14.500} y={14} r={3.200} /></>,
  surfCfg: <><path d="M1.500 0v19" stroke="#e03010" strokeWidth="3" /><path d="M1.500 5v4" stroke="#f0e000" strokeWidth="3" /><path d="M1.500 9v5" stroke="#20c8b0" strokeWidth="3" /><path d="M1.500 14v5" stroke="#1030b0" strokeWidth="3" /><path d="M3 8 9 3 19 8 13 14Z" fill="#8eaed6" stroke="#486890" strokeWidth=".8" /><Gear x={14.500} y={14} r={3.200} /></>,
};

const TreeItem = ({ level = 1, icon = "folder", label, state = "closed", bold }) => (
  <TreeRow $level={level} $bold={bold}>
    <Expander>
      {state === "closed" && <svg width="7" height="11" viewBox="0 0 7 11"><path d="M1 1 5.500 5.500 1 10" fill="none" stroke="#a2a2a2" strokeWidth="1.800" /></svg>}
      {state === "open" && <svg width="11" height="7" viewBox="0 0 11 7"><path d="M1 1 5.500 5.500 10 1" fill="none" stroke="#444" strokeWidth="1.900" /></svg>}
    </Expander>
    <svg width="20" height="19" viewBox="0 0 20 19">{treeArt[icon]}</svg>
    {label}
  </TreeRow>
);

const folders = [
  "Basisobjekte", "Spezielle Objekte", "Typen für Knoten", "Typen für Linien", "Typen für Stäbe",
  "Typen für Flächen", "Typen für Volumenkörper", "Typen für spezielle Objekte", "Imperfektionen",
  "Bauzustände", "Lastfälle und Kombinationen", "Lastassistenten", "Lasten", "Ergebnisse", "Hilfsobjekte",
];
const analysis = [
  ["situations", "Bemessungssituationen"],
  ["stress", "Zu analysierende Objekte - Spannungen"],
  ["range", "Zu analysierende Objekte - Spannungss"],
  ["material", "Materialien"],
  ["section", "Querschnitte"],
  ["thickness", "Dicken"],
  ["memberCfg", "Stabkonfigurationen", "leaf"],
  ["surfCfg", "Flächenkonfigurationen"],
];

const DockControls = () => (
  <>
    <DockButton aria-label="Abdocken">
      <svg width="11" height="11" viewBox="0 0 11 11"><path d="M3.500 1h6.500v5.500H3.500z" fill="none" stroke="#333" strokeWidth="1.200" /><path d="M1 4.500h6.500v5.500H1z" fill="#d8e5f2" stroke="#333" strokeWidth="1.200" /><path d="M3 1.300h7.500M.5 4.800h7.500" stroke="#333" strokeWidth="2" /></svg>
    </DockButton>
    <DockButton aria-label="Schließen">
      <svg width="10" height="10" viewBox="0 0 10 10"><path d="M1 1 9 9M9 1 1 9" stroke="#333" strokeWidth="2" /></svg>
    </DockButton>
  </>
);

/* ---------- model view ---------- */

const Base = ({ x, y }) => (
  <g>
    <path d={`M${x - 4} ${y + 7}h8l7 6-6 3h-11l-5-3z`} fill="#2fc22f" />
    <path d={`M${x + 4} ${y + 7}l7 6-6 3z`} fill="#259a25" />
    <ellipse cx={x} cy={y + 6} rx="4" ry="4" fill="#0fb50f" />
  </g>
);
const Knot = ({ x, y }) => <rect x={x - 3} y={y - 3} width="6" height="6" fill="#f00" />;

const Model = () => (
  <svg width="100%" height="100%" viewBox="345 132 1054 638">
    <defs>
      <linearGradient id="left" x1="600" y1="450" x2="860" y2="560" gradientUnits="userSpaceOnUse">
        <stop offset="0" stopColor="#e2d6c0" /><stop offset=".7" stopColor="#e4d6bd" /><stop offset="1" stopColor="#eddfc4" />
      </linearGradient>
      <linearGradient id="right" x1="905" y1="570" x2="990" y2="340" gradientUnits="userSpaceOnUse">
        <stop offset="0" stopColor="#f6e8ce" /><stop offset=".3" stopColor="#eadcc2" /><stop offset=".65" stopColor="#d6c8af" /><stop offset="1" stopColor="#ccbfa8" />
      </linearGradient>
      <linearGradient id="tip" x1="1020" y1="0" x2="1325" y2="0" gradientUnits="userSpaceOnUse">
        <stop offset="0" stopColor="#d8cab1" stopOpacity="0" /><stop offset=".6" stopColor="#cec1aa" /><stop offset="1" stopColor="#ada18d" />
      </linearGradient>
      <radialGradient id="glow" cx="868" cy="570" r="120" gradientUnits="userSpaceOnUse">
        <stop offset="0" stopColor="#f9ebd1" /><stop offset="1" stopColor="#f9ebd1" stopOpacity="0" />
      </radialGradient>
      <linearGradient id="tube"><stop offset="0" stopColor="#8296ea" /><stop offset=".6" stopColor="#7386d6" /><stop offset="1" stopColor="#5363ad" /></linearGradient>
    </defs>
    <path d="M785 633l8-8 9 6-4 4z" fill="#2a9f2a" />
    <path d="M753 646 790 694" stroke="#6578ce" strokeWidth="7" />
    <path d="M752 648 788 695" stroke="#8597ea" strokeWidth="3" />
    <Base x={793} y={697} />
    <Knot x={793} y={700} />
    <rect x="788" y="628" width="10" height="71" rx="2" fill="url(#tube)" />
    <circle cx="788.500" cy="692.500" r="2.700" fill="#bfe" stroke="#078688" strokeWidth="2" />
    <path d="M793 214C775 330 690 425 597 456L614 699 879 596Z" fill="url(#left)" />
    <path d="M793 214C775 330 690 425 597 456L614 699 879 596Z" fill="url(#glow)" />
    <path d="M793 214C880 310 1040 390 1190 424 1240 435 1280 430 1325 417L879 596Z" fill="url(#right)" />
    <path d="M793 214C880 310 1040 390 1190 424 1240 435 1280 430 1325 417L879 596Z" fill="url(#tip)" />
    <path d="M1200 426Q1260 438 1325 417L1280 437Q1240 438 1200 426Z" fill="#b3a793" />
    <path d="M788 215h9L790 249q-3 0-2-34z" fill="#7a8fe6" />
    <g fill="none" stroke="#7488dc" strokeWidth="1.700">
      <path d="M793 214 597 456 500 712" />
      <path d="M793 214 879 596" />
      <path d="M793 214 1325 417M793 214 1234 459M1190 425 1325 417" />
      <path d="M1045 457 1234 459" />
      <path d="M597 456 614 699 879 596 1234 459" strokeWidth="1.300" />
      <path d="M1234 459 1325 418" stroke="#5868b0" strokeWidth="2" />
    </g>
    <path d="M1231 446 1248 447V464L1231 462ZM1325 406 1340 407V424L1325 422Z" fill="#06c20e" />
    <path d="M1240 455 1248 447V464ZM1332 415 1340 407V424Z" fill="#08ac10" />
    <Base x={500} y={711} />
    <Base x={613.500} y={697} />
    <Knot x={793} y={214} /><Knot x={597} y={456} /><Knot x={500} y={713} /><Knot x={613.500} y={699} />
    <Knot x={879} y={596} /><Knot x={1234} y={458.500} /><Knot x={1279} y={438} /><Knot x={1324} y={418} />
  </svg>
);

const Cube = () => (
  <svg width="130" height="125" viewBox="1250 152 130 125" role="img" aria-label="Ansichtswürfel">
    <path d="M1257 179.500 1331 190.500V272L1257 261Z" fill="#dedede" />
    <path d="M1331 190.500 1373 171V253L1331 272Z" fill="#c6c6c6" />
    <path d="M1257 179.500 1300 160 1373 171 1331 190.500Z" fill="#b0b0b0" />
    <path d="M1289 177.500 1307 168 1350 174.500 1330 184.500Z" fill="#bdbdbd" />
    <g fill="none" stroke="#1c1c1c">
      <path d="M1257 179.500 1331 190.500V272L1257 261ZM1331 190.500 1373 171V253L1331 272M1257 179.500 1300 160 1373 171" strokeWidth="1.500" />
      <path d="M1275.500 182V264M1312 187.500V269M1257 200.500 1331 211L1373 192.500M1257 241 1331 251.500 1373 233M1342 186V266M1362.500 176.500V258M1275.500 182 1316 162.500M1312 187.500 1352 168M1270 174 1342 185.500M1289 165.500 1362.500 176.500" strokeWidth="1.900" />
    </g>
    <text x="1286" y="234" fontFamily="Liberation Sans" fontSize="17" fontWeight="700" fill="#79e879">-Y</text>
    <text x="1345" y="228" fontFamily="Liberation Sans" fontSize="15" fill="#e88a8a" fontWeight="700">-X</text>
    <path d="M1304 175l6 1M1312 178l12-1-3-3 6 2" stroke="#9494cc" strokeWidth="1.500" fill="none" />
  </svg>
);

const menus = ["Datei", "Bearbeiten", "Ansicht", "Einfügen", "Zuordnen", "Berechnen", "Ergebnisse", "Extras", "Optionen", "Fenster", "CAD-BIM", "Hilfe"];
const dockMenus = ["Gehe zu", "Bearbeiten", "Selektion", "Ansicht", "Einstellungen"];

export default function App() {
  return (
    <Window>
      <Global />
      <TitleBar>
        <svg width="21" height="21" viewBox="0 0 21 21">
          <path d="M2 9Q6 1 12 .5L20 4V14L16 17 14 11Q11 8 8 12L7 18 2 15Z" fill="#506c98" stroke="#2d4265" />
          <path d="M5 8q5-5 12 1M8 4l10 9M12 2l7 7M9 7l7-5M4 11l4-4" stroke="#a5bad8" fill="none" />
          <text x="1" y="18" fontFamily="Liberation Sans" fontWeight="700" fontSize="13" fill="#e8b820" stroke="#8a6a10" strokeWidth=".4">6</text>
        </svg>
        <WindowTitle>Dlubal RFEM | 6.02.0014 | Segment_DE.rf6</WindowTitle>
        <WindowButton aria-label="Minimieren"><svg width="13" height="13"><path d="M.5 6.500h12" stroke="#000" /></svg></WindowButton>
        <WindowButton aria-label="Maximieren"><svg width="13" height="13"><path d="M.5.5h12v12H.5z" fill="none" stroke="#000" /></svg></WindowButton>
        <WindowButton aria-label="Beenden"><svg width="13" height="13"><path d="M1 1 12 12M12 1 1 12" stroke="#000" strokeWidth="1.200" /></svg></WindowButton>
      </TitleBar>

      <MenuBar>
        <svg width="20" height="14" viewBox="0 0 20 14"><RfemMark /></svg>
        {menus.map((m) => <MenuItem key={m}>{m}</MenuItem>)}
        <Progress><ProgressCell /><ProgressCell /><ProgressCell /></Progress>
      </MenuBar>

      <ToolRow>
        <ToolGroup $first>
          <Tools items="newModel open dlubal cubes cards save print v newReport report | undo v redo g | *winList *winTable winGrey console script winBlue" />
        </ToolGroup>
        <ToolGroup><Tools items="selRhomb selEllipse selRing selPoly selPm" /></ToolGroup>
        <ToolGroup>
          <Tools items="newLoadCase loadCase" />
          <Combo $w={151} $gap={5} $indent={2}>
            <Swatch /><Swatch /><LoadTag>G</LoadTag><LoadCase>LF1</LoadCase>
            <Picker aria-label="Lastfall" defaultValue="G"><option>G</option></Picker>
            <Chevron />
          </Combo>
          <Stepper disabled aria-label="Zurück"><Triangle left /></Stepper>
          <Stepper aria-label="Weiter"><Triangle /></Stepper>
          <Tools items="funnelX v eyeSection numSection eyeLoad numLoad eyeGrid v eyeDiagram numDiagram |" />
        </ToolGroup>
        <Spacer />
        <More w={14} />
        <ToolGroup><Tools items="findX" /><More /></ToolGroup>
      </ToolRow>

      <ToolRow>
        <ToolGroup $first>
          <Tools drop={15} wide items="node v line member v polyline v | support lineSupport surfSupport | dimX v dimXX | surface v shell v opening v solid v solidBox | nodeLoad lineLoad memberLoad surfaceLoad imperfection v freeLoad v" />
        </ToolGroup>
        <ToolGroup><Tools wide items="funnelWin | portal film | bend fan dice reaction wing |" /></ToolGroup>
        <Spacer />
        <More w={14} />
        <ToolGroup>
          <Combo $w={150}>
            <Swatch />
            <Picker aria-label="Koordinatensystem"><option>1 - Global XYZ</option></Picker>
            <Chevron />
          </Combo>
          <More w={18} />
        </ToolGroup>
        <ToolGroup><Tools items="calc v" /><More /></ToolGroup>
      </ToolRow>

      <Workspace>
        <Navigator>
          <DockTitle><h2>Navigator - Daten</h2><DockControls /></DockTitle>
          <TreeFrame>
            <Tree>
              <li><TreeRow $root><svg width="20" height="15" viewBox="0 0 20 14"><RfemMark /></svg>RFEM</TreeRow></li>
              <li>
                <TreeItem level={0} icon="model" label="Segment_DE.rf6*" state="open" bold />
                <ul>
                  {folders.map((f) => <li key={f}><TreeItem label={f} icon={f === "Bauzustände" ? "stages" : "folder"} /></li>)}
                  <MarkedBranch>
                    <TreeItem label="Spannungs-Dehnungs-Berechnung" icon="openFolder" state="open" />
                    <ul>
                      {analysis.map(([icon, label, state]) => <li key={label}><TreeItem level={2} icon={icon} label={label} state={state} /></li>)}
                    </ul>
                  </MarkedBranch>
                  <li><TreeItem label="Ausdruckprotokolle" state="leaf" /></li>
                </ul>
              </li>
            </Tree>
            <HScroll>
              <svg width="7" height="11" viewBox="0 0 7 11"><path d="M6 1 1.500 5.500 6 10" fill="none" stroke="#444" strokeWidth="1.800" /></svg>
              <span />
              <svg width="7" height="11" viewBox="0 0 7 11"><path d="M1 1 5.500 5.500 1 10" fill="none" stroke="#444" strokeWidth="1.800" /></svg>
            </HScroll>
          </TreeFrame>
          <DockTabs>
            <DockTab $active aria-label="Daten">
              <svg width="22" height="20" viewBox="0 0 22 20"><path d="M6 1h14v11H6z" fill="#4f86e0" /><path d="M8 4h10v7H8z" fill="#cfe0f8" /><path d="M1 5h5l1 2h6v8H1z" fill="#f2c230" stroke="#b88a18" /><path d="M9 13q2-4 5-4t6 4l-4 1-2 5-2-5z" fill="#7fc0ee" stroke="#24508a" strokeWidth=".8" /><Dot x={9} y={13.500} r={1.300} /><Dot x={20} y={13.500} r={1.300} /></svg>
            </DockTab>
            <DockTab aria-label="Anzeige"><svg width="18" height="14" viewBox="-.5 -.5 13 10"><Eye /></svg></DockTab>
            <DockTab aria-label="Ansichten"><svg width="18" height="12" viewBox="0 0 18 12"><path d="M1 0h10q1 0 1 1v10q0 1-1 1H1q-1 0-1-1V1q0-1 1-1zM12 5l6-4v10l-6-4z" fill="#5a5a5a" /></svg></DockTab>
          </DockTabs>
        </Navigator>

        <Center>
          <Viewport>
            <Model />
            <ModeLabel>Sichtbarkeitsmodus</ModeLabel>
            <CubeBox><Cube /></CubeBox>
          </Viewport>

          <TableDock>
            <DockTitle><h2>Stabkonfigurationen | Spannungs-Dehnungs-Berechnung</h2><DockControls /></DockTitle>
            <MenuBar>{dockMenus.map((m) => <MenuItem key={m}>{m}</MenuItem>)}</MenuBar>
            <Tooltip role="tooltip">Bearbeitungsdialog öffnen</Tooltip>
            <TableTools>
              <Combo $w={232}>
                <svg width="18" height="18" viewBox="0 0 18 18"><path d="M1 6 6 1H18L12 6Z" fill="#f0c020" /><path d="M12 6 18 1V11L12 17Z" fill="#1c3fb4" /><path d="M8 1h4L7 6H4z" fill="#e84020" /><path d="M13 1h3l-4 5H9zM10 6h2v11h-2z" fill="#30c8a0" /><path d="M1 6H10V17H1Z" fill="#8c2a58" stroke="#581838" /></svg>
                <Picker aria-label="Bemessung"><option>Spannungs-Dehnungs-Berech...</option></Picker>
                <Chevron />
              </Combo>
              <Stepper aria-label="Zurück"><Triangle left /></Stepper>
              <Stepper disabled aria-label="Weiter"><Triangle /></Stepper>
              <Separator />
              <FullSeparator />
              <Combo $grow>
                <Icon name="calc" size={20} />
                <Picker aria-label="Daten"><option>Eingabedaten</option></Picker>
                <Chevron />
              </Combo>
              <Stepper disabled aria-label="Zurück"><Triangle left /></Stepper>
              <Stepper disabled aria-label="Weiter"><Triangle /></Stepper>
              <Separator $wide />
              <Tools items="*jumpUp *jumpDown" />
              <FullSeparator />
              <Tools items="eyeDiagram numDiagram | rowBack rowDelete rowIn rowOut | excel | globe" />
              <Separator />
              <ToolButton $marked aria-label="Bearbeitungsdialog öffnen"><Icon name="cardsMarked" /></ToolButton>
              <More />
            </TableTools>
            <TableArea>
              <Grid>
                <colgroup>
                  <col width="75" /><col width="250" /><col width="275" /><col width="106" /><col />
                </colgroup>
                <thead>
                  <tr><th /><th /><th /><th /><th /></tr>
                  <tr>
                    <th>Config<br />No.</th>
                    <th>Name der<br />Stabkonfiguration</th>
                    <th>Zugewiesen an<br />Stäbe Nr.</th>
                    <th>Optionen</th>
                    <th>Kommentar</th>
                  </tr>
                </thead>
                <tbody>
                  {[1, 2, 3, 4, ""].map((n) => <tr key={n}><th>{n}</th><td /><td /><td /><td /></tr>)}
                </tbody>
              </Grid>
              <VScroll>
                <svg width="11" height="7" viewBox="0 0 11 7"><path d="M1 6 5.500 1.500 10 6" fill="none" stroke="#555" strokeWidth="1.900" /></svg>
                <span />
                <svg width="11" height="7" viewBox="0 0 11 7"><path d="M1 1 5.500 5.500 10 1" fill="none" stroke="#555" strokeWidth="1.900" /></svg>
              </VScroll>
            </TableArea>
            <SheetBar>
              <Pager>
                <PagerButton aria-label="Erste"><Triangle left bar h={9} /></PagerButton>
                <PagerButton aria-label="Vorherige"><Triangle left h={9} /></PagerButton>
                <span>7 von 10</span>
                <PagerButton aria-label="Nächste"><Triangle h={9} /></PagerButton>
                <PagerButton aria-label="Letzte"><Triangle bar h={9} /></PagerButton>
              </Pager>
              <SheetTab $grow>nde Objekte - Spannungen</SheetTab>
              <SheetTab>Zu analysierende Objekte - Spannungsschwingbreiten</SheetTab>
              <SheetTab>Materialien</SheetTab>
              <SheetTab>Querschnitte</SheetTab>
              <SheetTab>Dicken</SheetTab>
              <SheetTab $active>Stabkonfigurationen</SheetTab>
              <SheetArrow aria-label="Nach links"><Triangle left h={13} /></SheetArrow>
              <SheetArrow aria-label="Nach rechts"><Triangle h={13} /></SheetArrow>
            </SheetBar>
          </TableDock>
        </Center>
      </Workspace>

      <StatusBar>
        <StatusToggle $on>FANG</StatusToggle>
        <StatusToggle>RASTER</StatusToggle>
        <StatusToggle $on>LRASTER</StatusToggle>
        <StatusToggle>OFANG</StatusToggle>
        <StatusCell $w={131}>Sichtbarkeitsmodus</StatusCell>
        <StatusCell $w={131} />
        <StatusCell $w={194}>KS: Global XYZ</StatusCell>
        <StatusCell $w={81}>Ebene: XZ</StatusCell>
        <StatusCell $w={94} /><StatusCell $w={94} /><StatusCell $w={94} /><StatusCell $w={8} />
        <svg width="10" height="10" viewBox="0 0 10 10"><path d="M7 1h3v2H7zM4 4h2v2H4zM7 4h3v2H7zM0 7h3v3H0zM4 7h2v3H4zM7 7h3v3H7z" fill="#bbb" /></svg>
      </StatusBar>
    </Window>
  );
}
